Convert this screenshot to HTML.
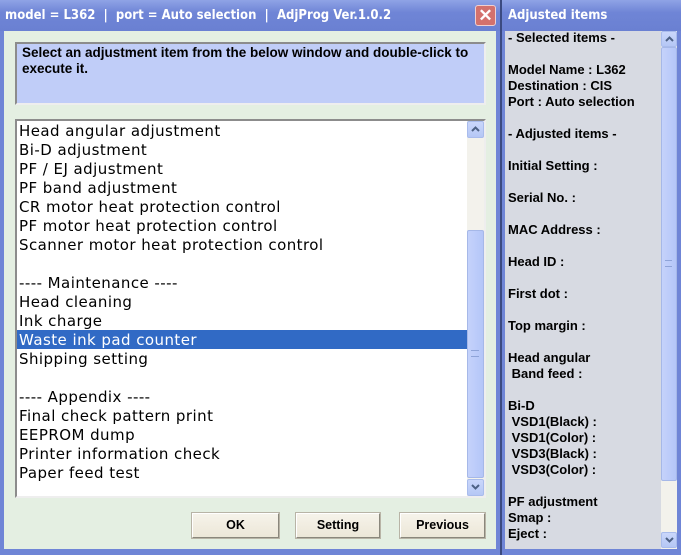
<!DOCTYPE html>
<html><head><style>
*{margin:0;padding:0;box-sizing:border-box}
body{width:681px;height:555px;overflow:hidden;background:#e4efe2;position:relative;font-family:"Liberation Sans",sans-serif}
.abs{position:absolute}
.tb{background:linear-gradient(#8fa3e6,#6f85d6 40%,#6a80d2);height:31px}
.tt{color:#fff;font-weight:bold;font-size:13px;font-family:"DejaVu Sans Condensed","Liberation Sans Narrow","Liberation Sans",sans-serif}
.list div{height:19px;line-height:20px;font-size:15px;letter-spacing:0.45px;font-family:"DejaVu Sans",sans-serif;padding-left:2px;color:#000;white-space:nowrap}
.btn{background:linear-gradient(#f6f3ea,#ece7d8);border:1px solid #fff;border-right-color:#8a877c;border-bottom-color:#8a877c;outline:1px solid #b8b4a6;font-weight:bold;font-size:12.5px;text-align:center;line-height:23px;height:25px}
.r div{font-weight:bold;font-size:13px;height:16px;line-height:16px;white-space:pre;color:#000}
.sb{background:#f3f2ec}
.arrow{background:linear-gradient(#cad7fb,#b5c7f5);border:1px solid #a9bcec;border-radius:2px}
.arrow svg{display:block;margin:4px auto 0}
.thumb{background:linear-gradient(90deg,#c5d2fb,#b4c6f8);border:1px solid #a6b8e8;border-radius:2px}
</style></head><body>
<div class="abs tb" style="left:0;top:0;width:500px"></div>
<div class="abs tt" style="left:5px;top:8px">model = L362 &nbsp;|&nbsp; port = Auto selection &nbsp;|&nbsp; AdjProg Ver.1.0.2</div>
<div class="abs" style="left:475px;top:5px;width:21px;height:21px;background:#d3716d;border:1px solid #f0d0d0;border-radius:3px;color:#fff;font-weight:bold;font-size:17px;line-height:19px;text-align:center">✕</div>
<div class="abs" style="left:0;top:31px;width:4px;height:524px;background:#6f85d6"></div>
<div class="abs" style="left:496px;top:31px;width:4px;height:524px;background:#6f85d6"></div>
<div class="abs" style="left:0;top:549px;width:500px;height:6px;background:#6f85d6"></div>

<div class="abs" style="left:15px;top:42px;width:471px;height:63px;background:#c0cdf8;border:2px solid #8c8c8c;border-right-color:#eee;border-bottom-color:#eee"></div>
<div class="abs" style="left:22px;top:45px;width:462px;font-size:13.5px;font-weight:bold;line-height:16px">Select an adjustment item from the below window and double-click to execute it.</div>

<div class="abs" style="left:15px;top:119px;width:471px;height:379px;background:#fff;border:2px solid #8c8c8c;border-right-color:#eee;border-bottom-color:#eee"></div>
<div class="abs list" style="left:17px;top:121px;width:450px">
<div>Head angular adjustment</div><div>Bi-D adjustment</div><div>PF / EJ adjustment</div><div>PF band adjustment</div><div>CR motor heat protection control</div><div>PF motor heat protection control</div><div>Scanner motor heat protection control</div><div></div><div>---- Maintenance ----</div><div>Head cleaning</div><div>Ink charge</div><div style="background:#316ac5;color:#fff">Waste ink pad counter</div><div>Shipping setting</div><div></div><div>---- Appendix ----</div><div>Final check pattern print</div><div>EEPROM dump</div><div>Printer information check</div><div>Paper feed test</div>
</div>
<div class="abs sb" style="left:467px;top:121px;width:17px;height:375px"></div>
<div class="abs arrow" style="left:467px;top:121px;width:17px;height:17px"><svg width="9" height="6"><path d="M1 5L4.5 1.5L8 5" fill="none" stroke="#4d6185" stroke-width="2"/></svg></div>
<div class="abs thumb" style="left:467px;top:230px;width:17px;height:248px"></div>
<div class="abs" style="left:471px;top:350px;width:8px;height:7px;border-top:1px solid #8ea3d8;border-bottom:1px solid #8ea3d8"></div>
<div class="abs arrow" style="left:467px;top:479px;width:17px;height:17px"><svg width="9" height="6"><path d="M1 1L4.5 4.5L8 1" fill="none" stroke="#4d6185" stroke-width="2"/></svg></div>

<div class="abs btn" style="left:192px;top:513px;width:87px">OK</div>
<div class="abs btn" style="left:296px;top:513px;width:84px">Setting</div>
<div class="abs btn" style="left:400px;top:513px;width:85px">Previous</div>

<div class="abs" style="left:500px;top:0;width:2px;height:555px;background:#3b4a80"></div>
<div class="abs tb" style="left:502px;top:0;width:179px"></div>
<div class="abs tt" style="left:508px;top:8px">Adjusted items</div>
<div class="abs" style="left:502px;top:31px;width:179px;height:524px;background:#6f85d6"></div>
<div class="abs" style="left:505px;top:31px;width:172px;height:518px;background:#d7dae2"></div>
<div class="abs r" style="left:508px;top:30px">
<div>- Selected items -</div><div> </div><div>Model Name : L362</div><div>Destination : CIS</div><div>Port : Auto selection</div><div> </div><div>- Adjusted items -</div><div> </div><div>Initial Setting :</div><div> </div><div>Serial No. :</div><div> </div><div>MAC Address :</div><div> </div><div>Head ID :</div><div> </div><div>First dot :</div><div> </div><div>Top margin :</div><div> </div><div>Head angular</div><div> Band feed :</div><div> </div><div>Bi-D</div><div> VSD1(Black) :</div><div> VSD1(Color) :</div><div> VSD3(Black) :</div><div> VSD3(Color) :</div><div> </div><div>PF adjustment</div><div>Smap :</div><div>Eject :</div>
</div>
<div class="abs sb" style="left:661px;top:31px;width:16px;height:518px"></div>
<div class="abs arrow" style="left:661px;top:31px;width:16px;height:16px"><svg width="9" height="6"><path d="M1 5L4.5 1.5L8 5" fill="none" stroke="#4d6185" stroke-width="2"/></svg></div>
<div class="abs thumb" style="left:661px;top:47px;width:16px;height:434px"></div>
<div class="abs" style="left:665px;top:260px;width:7px;height:7px;border-top:1px solid #8ea3d8;border-bottom:1px solid #8ea3d8"></div>
<div class="abs arrow" style="left:661px;top:532px;width:16px;height:16px"><svg width="9" height="6"><path d="M1 1L4.5 4.5L8 1" fill="none" stroke="#4d6185" stroke-width="2"/></svg></div>
</body></html>
